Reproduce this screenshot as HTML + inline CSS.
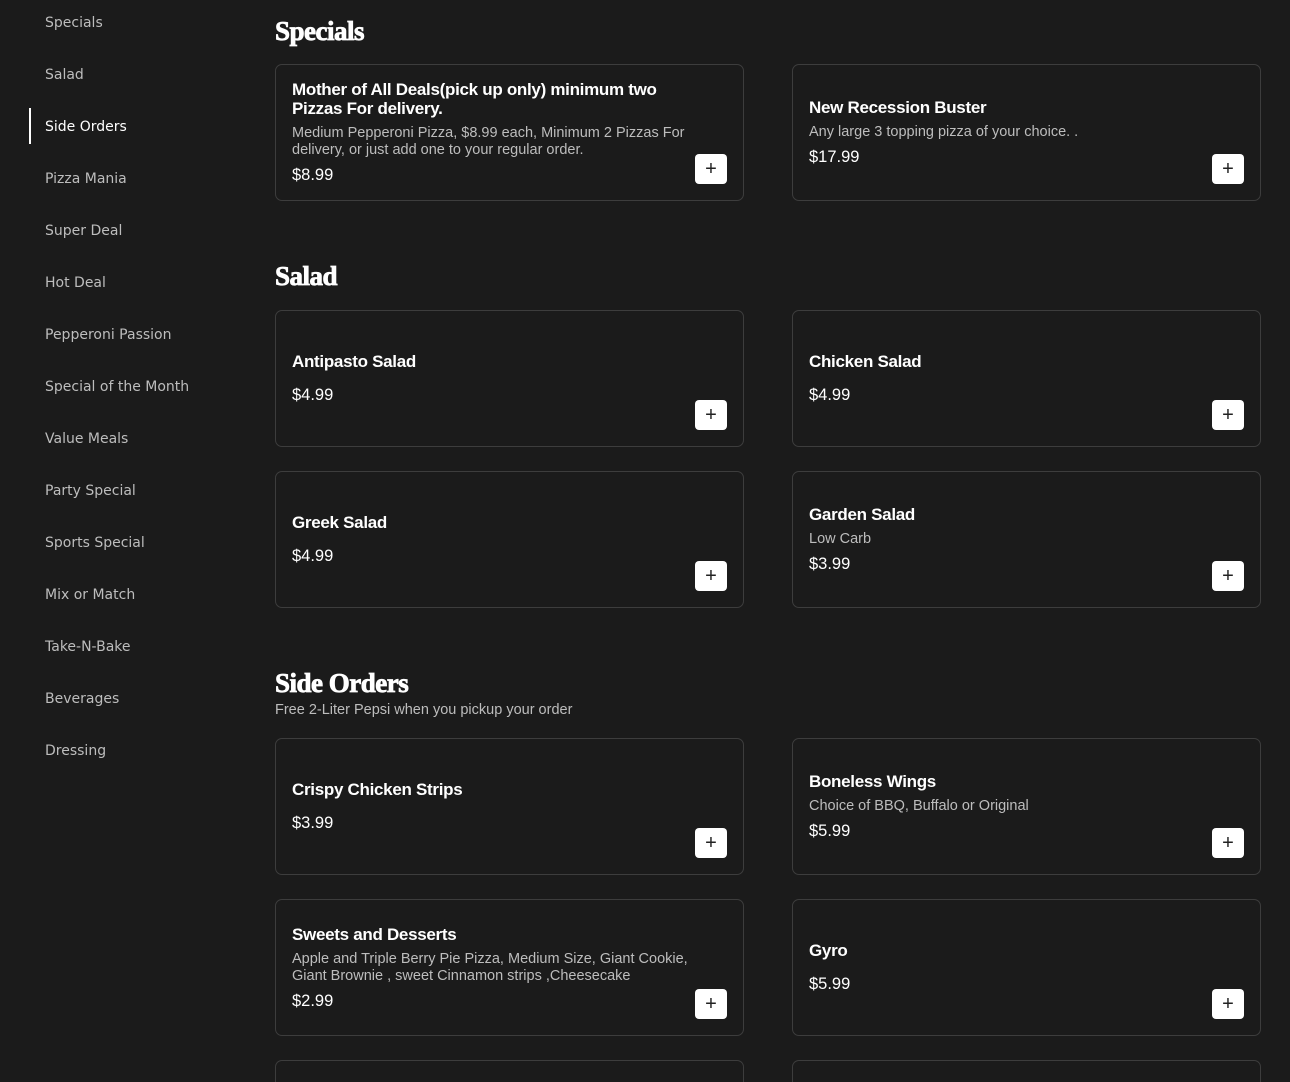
<!DOCTYPE html><html style="overflow:hidden;height:1082px"><head><style>
body{margin:0;background:#1b1b1b;width:1290px;height:1082px;overflow:hidden;position:relative;font-family:"Liberation Sans",sans-serif;color:#fff}
.nav div{position:absolute;left:45px;font-family:"DejaVu Sans",sans-serif;font-size:14px;color:#bdbdbd;white-space:nowrap;line-height:20px}
.nav .act{color:#fff}
.bar{position:absolute;left:29px;top:108px;width:2px;height:36px;background:#fff}
h2{position:absolute;left:275px;margin:0;font-family:"Liberation Serif",serif;font-weight:900;font-size:27px;line-height:30px;letter-spacing:-0.5px;-webkit-text-stroke:0.8px #fff}
.sub{position:absolute;left:275px;font-size:14.5px;color:#bdbdbd}
.card{position:absolute;border:1px solid #3d3d3d;border-radius:7px;display:flex;flex-direction:column;justify-content:center;padding:0 30px 0 16px;box-sizing:border-box;width:469px;height:137px}
.t{font-size:17px;font-weight:bold;line-height:19px;letter-spacing:-0.3px;max-width:400px}
.d{font-size:14.5px;color:#bdbdbd;line-height:17px;margin-top:7px}
.p{font-size:16.5px;margin-top:6px;line-height:20px}
.p2{margin-top:14px}
.b{position:absolute;right:16px;bottom:16px;width:32px;height:30px;background:#fff;border-radius:4px;color:#222;font-size:20px;line-height:30px;text-align:center}
</style></head><body>
<div class="nav">
<div style="top:13px">Specials</div><div style="top:65px">Salad</div><div class="act" style="top:117px">Side Orders</div><div style="top:169px">Pizza Mania</div><div style="top:221px">Super Deal</div><div style="top:273px">Hot Deal</div><div style="top:325px">Pepperoni Passion</div><div style="top:377px">Special of the Month</div><div style="top:429px">Value Meals</div><div style="top:481px">Party Special</div><div style="top:533px">Sports Special</div><div style="top:585px">Mix or Match</div><div style="top:637px">Take-N-Bake</div><div style="top:689px">Beverages</div><div style="top:741px">Dressing</div>
</div>
<div class="bar"></div>
<h2 style="top:16px">Specials</h2>
<div class="card" style="left:275px;top:64px"><div class="t">Mother of All Deals(pick up only) minimum two Pizzas For delivery.</div><div class="d">Medium Pepperoni Pizza, $8.99 each, Minimum 2 Pizzas For delivery, or just add one to your regular order.</div><div class="p">$8.99</div><div class="b">+</div></div>
<div class="card" style="left:792px;top:64px"><div class="t">New Recession Buster</div><div class="d">Any large 3 topping pizza of your choice. .</div><div class="p">$17.99</div><div class="b">+</div></div>
<h2 style="top:261px">Salad</h2>
<div class="card" style="left:275px;top:310px"><div class="t">Antipasto Salad</div><div class="p p2">$4.99</div><div class="b">+</div></div>
<div class="card" style="left:792px;top:310px"><div class="t">Chicken Salad</div><div class="p p2">$4.99</div><div class="b">+</div></div>
<div class="card" style="left:275px;top:471px"><div class="t">Greek Salad</div><div class="p p2">$4.99</div><div class="b">+</div></div>
<div class="card" style="left:792px;top:471px"><div class="t">Garden Salad</div><div class="d">Low Carb</div><div class="p">$3.99</div><div class="b">+</div></div>
<h2 style="top:668px">Side Orders</h2>
<div class="sub" style="top:702px">Free 2-Liter Pepsi when you pickup your order</div>
<div class="card" style="left:275px;top:738px"><div class="t">Crispy Chicken Strips</div><div class="p p2">$3.99</div><div class="b">+</div></div>
<div class="card" style="left:792px;top:738px"><div class="t">Boneless Wings</div><div class="d">Choice of BBQ, Buffalo or Original</div><div class="p">$5.99</div><div class="b">+</div></div>
<div class="card" style="left:275px;top:899px"><div class="t">Sweets and Desserts</div><div class="d">Apple and Triple Berry Pie Pizza, Medium Size, Giant Cookie, Giant Brownie , sweet Cinnamon strips ,Cheesecake</div><div class="p">$2.99</div><div class="b">+</div></div>
<div class="card" style="left:792px;top:899px"><div class="t">Gyro</div><div class="p p2">$5.99</div><div class="b">+</div></div>
<div class="card" style="left:275px;top:1060px;height:22px;border-bottom:none;border-radius:7px 7px 0 0"></div>
<div class="card" style="left:792px;top:1060px;height:22px;border-bottom:none;border-radius:7px 7px 0 0"></div>
</body></html>
